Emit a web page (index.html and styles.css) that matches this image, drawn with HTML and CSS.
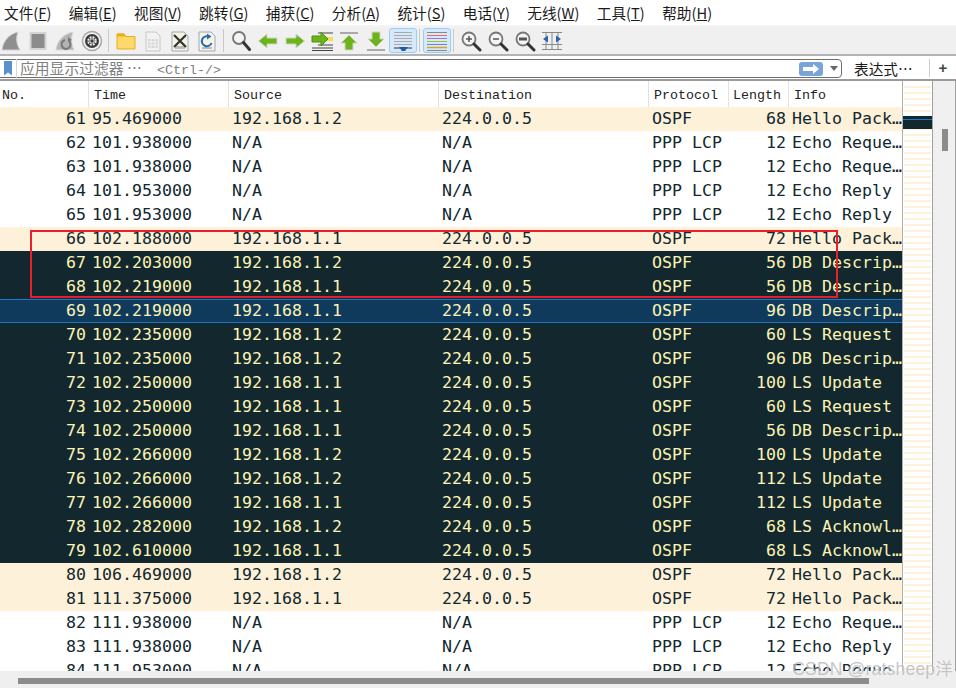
FILE: index.html
```html
<!DOCTYPE html>
<html lang="zh">
<head>
<meta charset="utf-8">
<title>Wireshark</title>
<link rel="stylesheet" href="styles.css">
</head>
<body>
<div class="app">
  <nav class="menubar">
    <span class="menu">文件(<u>F</u>)</span>
    <span class="menu">编辑(<u>E</u>)</span>
    <span class="menu">视图(<u>V</u>)</span>
    <span class="menu">跳转(<u>G</u>)</span>
    <span class="menu">捕获(<u>C</u>)</span>
    <span class="menu">分析(<u>A</u>)</span>
    <span class="menu">统计(<u>S</u>)</span>
    <span class="menu">电话(<u>Y</u>)</span>
    <span class="menu">无线(<u>W</u>)</span>
    <span class="menu">工具(<u>T</u>)</span>
    <span class="menu">帮助(<u>H</u>)</span>
  </nav>

  <div class="toolbar">
    <span class="tool"><svg viewBox="0 0 22 22"><path d="M2 20C3 11 9 4 18 2c-2 5-2 12 2 18z" fill="#8f8f8f" stroke="#d0d0d0"/></svg></span>
    <span class="tool"><svg viewBox="0 0 22 22"><rect x="3.5" y="3" width="15" height="16" fill="#8c8c8c" stroke="#d4d4d4" stroke-width="2"/></svg></span>
    <span class="tool"><svg viewBox="0 0 22 22"><path d="M2 20C3 11 9 4 19 2c-2 5-2 12 1 18z" fill="#b4b4b4" stroke="#d8d8d8"/><path d="M15 11a4.500 4.500 0 1 1-4-1" fill="none" stroke="#777" stroke-width="2"/><path d="M14 7v5l4-2z" fill="#777"/></svg></span>
    <span class="tool"><svg viewBox="0 0 22 22"><circle cx="11" cy="11" r="9.500" fill="#f2f2f2" stroke="#a8a8a8" stroke-width="1.500"/><circle cx="11" cy="11" r="7" fill="#3c3c3c"/><circle cx="11" cy="11" r="3.800" fill="none" stroke="#f0f0f0" stroke-width="1.800" stroke-dasharray="2 1"/><circle cx="11" cy="11" r="2.200" fill="none" stroke="#e0e0e0"/></svg></span>
    <span class="sep"></span>
    <span class="tool"><svg viewBox="0 0 22 22"><path d="M2 4h7l2 2.500h9V19H2z" fill="#fdd96b" stroke="#e8ad20"/><path d="M2 3.500h7l2 3H2z" fill="#eeac1e"/></svg></span>
    <span class="tool"><svg viewBox="0 0 22 22"><path d="M4 2h10l4 4v15H4z" fill="#f2f2f2" stroke="#c8c8c8"/><path d="M6 9h10v9H6z" fill="#d8d8d8"/><path d="M6 12h10M6 15h10M9 9v9M13 9v9" stroke="#f2f2f2"/></svg></span>
    <span class="tool"><svg viewBox="0 0 22 22"><path d="M3 2h12l4 4v15H3z" fill="#f7f3e2" stroke="#9ab"/><path d="M6 16h10v3H6z" fill="#bbb"/><path d="M5 5l12 12M17 5L5 17" stroke="#333" stroke-width="2.200"/></svg></span>
    <span class="tool"><svg viewBox="0 0 22 22"><path d="M3 2h12l4 4v15H3z" fill="#f7f3e2" stroke="#9ab"/><path d="M6 17h10v2H6z" fill="#bbb"/><path d="M15.500 13a5 5 0 1 1-2-6" fill="none" stroke="#2469b5" stroke-width="2"/><path d="M11 3.500v6l4.500-3z" fill="#2469b5"/></svg></span>
    <span class="sep"></span>
    <span class="tool"><svg viewBox="0 0 22 22"><circle cx="9" cy="8" r="6" fill="#f4f4f4" stroke="#777" stroke-width="1.800"/><path d="M13.500 12.500l6 7" stroke="#333" stroke-width="3" stroke-linecap="round"/></svg></span>
    <span class="tool"><svg viewBox="0 0 22 22"><path d="M1.500 11L10 4v4h10v6H10v4z" fill="#6db31c" stroke="#cfd8c4"/></svg></span>
    <span class="tool"><svg viewBox="0 0 22 22"><path d="M20.500 11L12 4v4H2v6h10v4z" fill="#6db31c" stroke="#cfd8c4"/></svg></span>
    <span class="tool"><svg viewBox="0 0 22 22"><path d="M7 3h15M7 15h15M1 18h21M1 20.500h21" stroke="#444"/><path d="M16 7h6v4h-6z" fill="#f4e04d"/><path d="M1 6h9V2l7 7-7 7v-4H1z" fill="#6db31c" stroke="#4e8f10"/></svg></span>
    <span class="tool"><svg viewBox="0 0 22 22"><path d="M2 3h18" stroke="#aaa" stroke-width="2"/><path d="M11 5l8 8h-4v7H7v-7H3z" fill="#6db31c" stroke="#cfd8c4"/></svg></span>
    <span class="tool"><svg viewBox="0 0 22 22"><path d="M2 20h18" stroke="#aaa" stroke-width="2"/><path d="M11 17l8-8h-4V2H7v7H3z" fill="#6db31c" stroke="#cfd8c4"/></svg></span>
    <span class="tool active"><svg viewBox="0 0 22 22"><path d="M2 2.500h18M2 5.500h18M2 8.500h18M2 11.500h18M2 14.500h18" stroke="#aaa"/><path d="M2 18h18" stroke="#333"/><path d="M7 17h9l-3 4h-3z" fill="#1f5ca8"/></svg></span>
    <span class="sep"></span>
    <span class="tool active"><svg viewBox="0 0 22 22"><path d="M1 2.500h20" stroke="#888"/><path d="M1 5.500h20" stroke="#e66"/><path d="M1 8.500h20" stroke="#b070d0"/><path d="M1 11.500h20" stroke="#8cc63f"/><path d="M1 14.500h20" stroke="#6a7fd0"/><path d="M1 17.500h20" stroke="#d9a520" stroke-width="1.500"/><path d="M1 20.500h20" stroke="#888"/></svg></span>
    <span class="sep"></span>
    <span class="tool"><svg viewBox="0 0 22 22"><circle cx="9" cy="9" r="6.500" fill="#f4f4f4" stroke="#777" stroke-width="1.800"/><path d="M6 9h6M9 6v6" stroke="#555" stroke-width="1.500"/><path d="M14 14l6 6" stroke="#333" stroke-width="3" stroke-linecap="round"/></svg></span>
    <span class="tool"><svg viewBox="0 0 22 22"><circle cx="9" cy="9" r="6.500" fill="#f4f4f4" stroke="#777" stroke-width="1.800"/><path d="M6 9h6" stroke="#555" stroke-width="1.500"/><path d="M14 14l6 6" stroke="#333" stroke-width="3" stroke-linecap="round"/></svg></span>
    <span class="tool"><svg viewBox="0 0 22 22"><circle cx="9" cy="9" r="6.500" fill="#f4f4f4" stroke="#777" stroke-width="1.800"/><path d="M5 9h8" stroke="#555" stroke-width="3"/><path d="M14 14l6 6" stroke="#333" stroke-width="3" stroke-linecap="round"/></svg></span>
    <span class="tool"><svg viewBox="0 0 22 22"><path d="M1 2.500h20M1 19.500h20M1 14.500h20M5 2v18M11 2v18M17 2v18" stroke="#888"/><path d="M2 9l5-3.500v7zM20 9l-5-3.500v7z" fill="#2a64b0"/></svg></span>
  </div>

  <div class="filterbar">
    <div class="filter">
      <svg class="bookmark" viewBox="0 0 9 15"><path d="M0 0h8v14.500L4 11.500 0 14.500z" fill="#5b90cf"/></svg>
      <span class="filter-text">应用显示过滤器 … <span class="hint">&lt;Ctrl-/&gt;</span></span>
      <span class="apply"><svg viewBox="0 0 24 14"><path d="M4 5h10V2l6 5-6 5V9H4z" fill="#fff"/></svg></span>
      <span class="drop"></span>
    </div>
    <span class="expr">表达式…</span>
    <span class="plus">+</span>
  </div>

  <div class="main">
    <div class="list">
      <div class="row head"><span class="c-no">No.</span><span class="c-time">Time</span><span>Source</span><span>Destination</span><span>Protocol</span><span class="c-len">Length</span><span>Info</span></div>
      <div class="row cream"><span class="num">61</span><span>95.469000</span><span>192.168.1.2</span><span>224.0.0.5</span><span>OSPF</span><span class="num">68</span><span>Hello Pack…</span></div>
      <div class="row"><span class="num">62</span><span>101.938000</span><span>N/A</span><span>N/A</span><span>PPP LCP</span><span class="num">12</span><span>Echo Reque…</span></div>
      <div class="row"><span class="num">63</span><span>101.938000</span><span>N/A</span><span>N/A</span><span>PPP LCP</span><span class="num">12</span><span>Echo Reque…</span></div>
      <div class="row"><span class="num">64</span><span>101.953000</span><span>N/A</span><span>N/A</span><span>PPP LCP</span><span class="num">12</span><span>Echo Reply</span></div>
      <div class="row"><span class="num">65</span><span>101.953000</span><span>N/A</span><span>N/A</span><span>PPP LCP</span><span class="num">12</span><span>Echo Reply</span></div>
      <div class="row cream"><span class="num">66</span><span>102.188000</span><span>192.168.1.1</span><span>224.0.0.5</span><span>OSPF</span><span class="num">72</span><span>Hello Pack…</span></div>
      <div class="row dark"><span class="num">67</span><span>102.203000</span><span>192.168.1.2</span><span>224.0.0.5</span><span>OSPF</span><span class="num">56</span><span>DB Descrip…</span></div>
      <div class="row dark"><span class="num">68</span><span>102.219000</span><span>192.168.1.1</span><span>224.0.0.5</span><span>OSPF</span><span class="num">56</span><span>DB Descrip…</span></div>
      <div class="row selected"><span class="num">69</span><span>102.219000</span><span>192.168.1.1</span><span>224.0.0.5</span><span>OSPF</span><span class="num">96</span><span>DB Descrip…</span></div>
      <div class="row dark"><span class="num">70</span><span>102.235000</span><span>192.168.1.2</span><span>224.0.0.5</span><span>OSPF</span><span class="num">60</span><span>LS Request</span></div>
      <div class="row dark"><span class="num">71</span><span>102.235000</span><span>192.168.1.2</span><span>224.0.0.5</span><span>OSPF</span><span class="num">96</span><span>DB Descrip…</span></div>
      <div class="row dark"><span class="num">72</span><span>102.250000</span><span>192.168.1.1</span><span>224.0.0.5</span><span>OSPF</span><span class="num">100</span><span>LS Update</span></div>
      <div class="row dark"><span class="num">73</span><span>102.250000</span><span>192.168.1.1</span><span>224.0.0.5</span><span>OSPF</span><span class="num">60</span><span>LS Request</span></div>
      <div class="row dark"><span class="num">74</span><span>102.250000</span><span>192.168.1.1</span><span>224.0.0.5</span><span>OSPF</span><span class="num">56</span><span>DB Descrip…</span></div>
      <div class="row dark"><span class="num">75</span><span>102.266000</span><span>192.168.1.2</span><span>224.0.0.5</span><span>OSPF</span><span class="num">100</span><span>LS Update</span></div>
      <div class="row dark"><span class="num">76</span><span>102.266000</span><span>192.168.1.2</span><span>224.0.0.5</span><span>OSPF</span><span class="num">112</span><span>LS Update</span></div>
      <div class="row dark"><span class="num">77</span><span>102.266000</span><span>192.168.1.1</span><span>224.0.0.5</span><span>OSPF</span><span class="num">112</span><span>LS Update</span></div>
      <div class="row dark"><span class="num">78</span><span>102.282000</span><span>192.168.1.2</span><span>224.0.0.5</span><span>OSPF</span><span class="num">68</span><span>LS Acknowl…</span></div>
      <div class="row dark"><span class="num">79</span><span>102.610000</span><span>192.168.1.1</span><span>224.0.0.5</span><span>OSPF</span><span class="num">68</span><span>LS Acknowl…</span></div>
      <div class="row cream"><span class="num">80</span><span>106.469000</span><span>192.168.1.2</span><span>224.0.0.5</span><span>OSPF</span><span class="num">72</span><span>Hello Pack…</span></div>
      <div class="row cream"><span class="num">81</span><span>111.375000</span><span>192.168.1.1</span><span>224.0.0.5</span><span>OSPF</span><span class="num">72</span><span>Hello Pack…</span></div>
      <div class="row"><span class="num">82</span><span>111.938000</span><span>N/A</span><span>N/A</span><span>PPP LCP</span><span class="num">12</span><span>Echo Reque…</span></div>
      <div class="row"><span class="num">83</span><span>111.938000</span><span>N/A</span><span>N/A</span><span>PPP LCP</span><span class="num">12</span><span>Echo Reply</span></div>
      <div class="row"><span class="num">84</span><span>111.953000</span><span>N/A</span><span>N/A</span><span>PPP LCP</span><span class="num">12</span><span>Echo Reque…</span></div>
    </div>
    <div class="minimap"><div class="band"></div></div>
    <div class="vscroll"><div class="vthumb"></div></div>
  </div>

  <div class="hscroll"><div class="hthumb"></div></div>
  <div class="watermark">CSDN @ratsheep洋</div>
</div>
</body>
</html>
```

FILE: styles.css
```css
* { box-sizing: border-box; }
html, body { margin: 0; padding: 0; }
body { background: #fff; overflow: hidden; }

.app {
  position: relative;
  width: 956px;
  height: 688px;
  overflow: hidden;
  display: flex;
  flex-direction: column;
  font-family: "Noto Sans CJK SC", "Noto Sans", sans-serif;
  color: #1a1a1a;
}

/* menu */
.menubar {
  height: 27px;
  display: flex;
  gap: 17.400px;
  padding: 2px 0 0 4px;
  font-size: 14.670px;
  line-height: 21px;
  border-bottom: 2px solid #f4f4f4;
  flex: none;
}
.menu { white-space: nowrap; }

/* toolbar */
.toolbar {
  height: 29px;
  flex: none;
  background: #f0f0f0;
  border-bottom: 2px solid #b4b4b4;
  display: flex;
  align-items: center;
  gap: 5px;
}
.tool {
  width: 22px;
  height: 25px;
  display: flex;
  align-items: center;
  justify-content: center;
  flex: none;
}
.tool svg { width: 22px; height: 22px; flex: none; display: block; }
.tool.active {
  width: 28px;
  margin: 0 -3px;
  background: #d5e9fa;
  border: 1px solid #99cdf7;
  border-radius: 3px;
}
.sep { width: 1px; height: 23px; background: #c8c8c8; margin-right: 1px; flex: none; }

/* filter */
.filterbar {
  height: 23px;
  flex: none;
  display: flex;
  align-items: flex-start;
  padding-top: 3px;
  background: #fff;
}
.filter {
  width: 844px;
  height: 19px;
  margin-left: -2px;
  padding-left: 5px;
  flex: none;
  display: flex;
  align-items: center;
  border: 1px solid #6e6e6e;
  border-radius: 0 4px 4px 0;
  background: #fff;
}
.bookmark { width: 9px; height: 15px; flex: none; }
.filter-text {
  flex: 1;
  margin-left: 3px;
  padding-left: 3px;
  border-left: 1px solid #d8d8d8;
  color: #808080;
  font-size: 14.800px;
  line-height: 17px;
  white-space: pre;
}
.hint { font-family: "Liberation Mono", monospace; font-size: 13.330px; margin-left: 12px; }
.apply {
  width: 24px;
  height: 14px;
  border-radius: 3px;
  background: #7aa5d8;
  flex: none;
  display: block;
}
.apply svg { width: 24px; height: 14px; display: block; }
.drop {
  width: 0;
  height: 0;
  margin: 0 3px 0 7px;
  border: 4px solid transparent;
  border-top: 5px solid #666;
  border-bottom: 0;
  flex: none;
}
.expr { margin-left: 12px; width: 75px; font-size: 14.670px; line-height: 20px; flex: none; }
.plus {
  width: 27px;
  height: 18px;
  border-left: 1px solid #cfcfcf;
  text-align: center;
  font: bold 15px/18px "Liberation Sans", sans-serif;
  color: #444;
  flex: none;
}

/* packet list */
.main {
  flex: 1;
  min-height: 0;
  display: flex;
  border-top: 2px solid #9a9a9a;
}
.list { width: 902px; flex: none; overflow: hidden; }
.row {
  display: grid;
  grid-template-columns: 89px 140px 210px 210px 80px 60px 113px;
  height: 24px;
  background: #fff;
  color: #12272e;
  font-family: "DejaVu Sans Mono", monospace;
  font-size: 16.600px;
  line-height: 24px;
  white-space: pre;
}
.row > span { padding: 0 3px; overflow: hidden; }
.row > .num { text-align: right; }
.row.cream { background: #fdf1d9; }
.row.dark { background: #12272e; color: #fcf3b4; }
.row.selected {
  background: #0f3a5c;
  color: #fcf3b4;
  border-top: 1px solid #1a78c8;
  border-bottom: 1px solid #1a78c8;
  line-height: 22px;
}

.row.head {
  height: 26px;
  background: #fff;
  color: #222;
  font-family: "Liberation Mono", monospace;
  font-size: 13.330px;
  line-height: 23px;
}
.row.head > span { padding-top: 3px; padding-left: 5px; border-right: 1px solid #e2e2e2; }
.row.head > .c-no { padding-left: 2px; }
.row.head > .c-len { padding-left: 4px; }
.row.head > span:last-child { border-right: 0; }

/* packet map */
.minimap {
  width: 31px;
  flex: none;
  padding-top: 35px;
  border-left: 1px solid #b0b0b0;
  border-right: 1px solid #a0a0a0;
  background: repeating-linear-gradient(to bottom, #fdf1d9 0 2px, #fff 2px 6px) 1px 5px / 27px 100% no-repeat #fff;
}
.band {
  height: 13px;
  background: #12272e;
  position: relative;
}
.band::before {
  content: "";
  position: absolute;
  left: 0;
  right: 0;
  top: 3px;
  height: 1px;
  background: #1a78c8;
}
.vscroll {
  flex: 1;
  background: #f0f0f0;
  padding: 48px 0 0 9px;
  border-right: 1px solid #a0a0a0;
}
.vthumb { width: 6px; height: 22px; background: #8c8c8c; }

.hscroll {
  height: 17px;
  flex: none;
  padding: 7px 0 0 18px;
  background: #efefef;
}
.hthumb { width: 851px; height: 6px; background: #8c8c8c; }

/* overlays */
.app::after {
  content: "";
  position: absolute;
  left: 30px;
  top: 230px;
  width: 804px;
  height: 64px;
  border: 2px solid #e8202a;
}
.watermark {
  position: absolute;
  right: 3px;
  top: 658px;
  font: 17.500px/22px "Liberation Sans", "Noto Sans CJK SC", sans-serif;
  letter-spacing: 0.2px;
  color: rgba(140, 140, 140, 0.5);
  text-shadow: 0 0 1px rgba(255, 255, 255, 0.8);
}
```
